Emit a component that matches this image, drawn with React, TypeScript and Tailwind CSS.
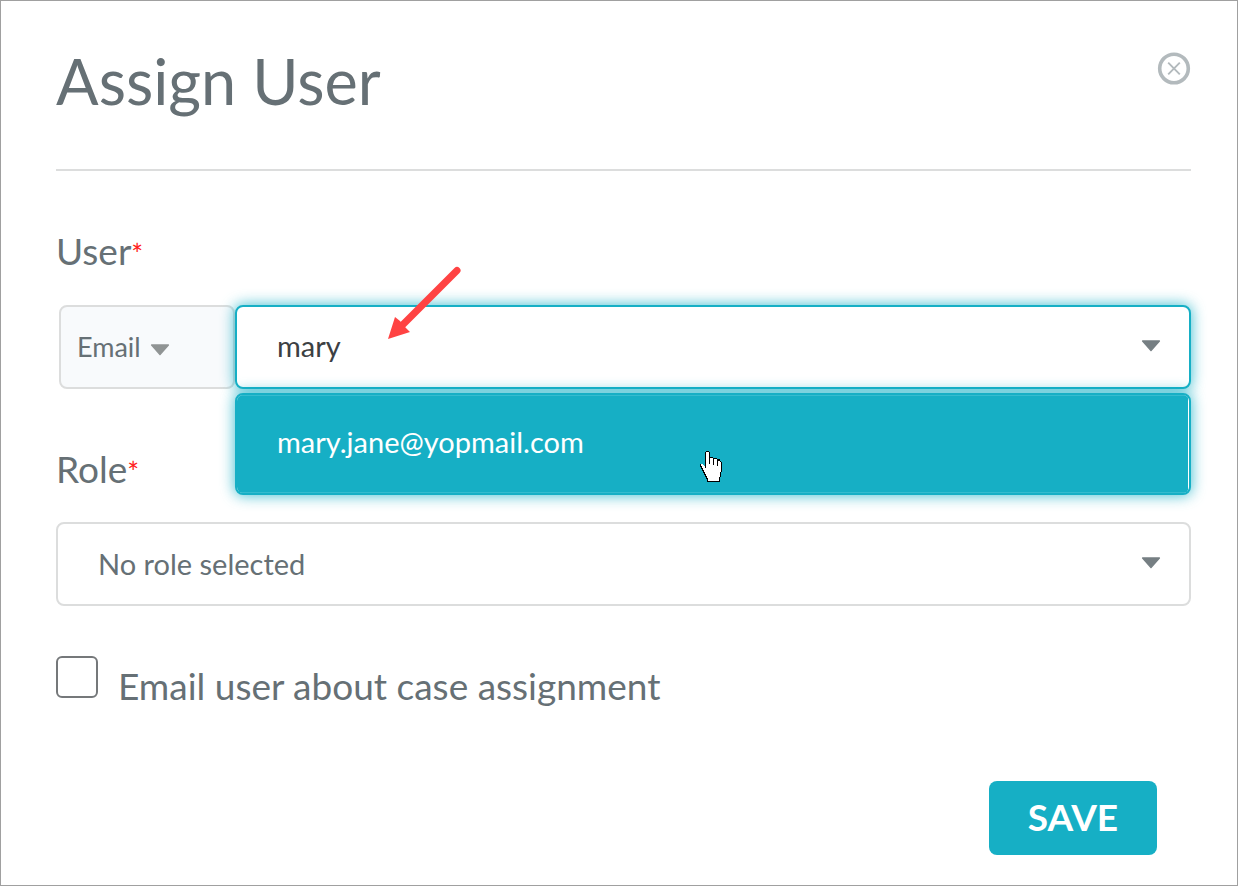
import { useState } from "react";

function Caret({ className }: { className: string }) {
  return (
    <svg
      aria-hidden="true"
      viewBox="0 0 20 12"
      className={`pointer-events-none absolute h-3 w-5 ${className}`}
    >
      <path
        d="M1.6 1h16.8L10 10.6z"
        fill="currentColor"
        stroke="currentColor"
        strokeWidth="1.4"
        strokeLinejoin="round"
      />
    </svg>
  );
}

function PointerCursor() {
  return (
    <svg
      aria-hidden="true"
      viewBox="0 0 22 31"
      shapeRendering="crispEdges"
      className="pointer-events-none absolute top-[146px] left-[465px] h-[31px] w-[22px]"
    >
      <path
        d="M6 0h3v1h1v5h3v1h4v1h3v2h1v1h1v10h-1v5h-1v5H7v-3H6v-2H5v-2H4v-2H3v-2H2v-2H1v-2H0v-3h3v1h1v1h1V1h1z"
        fill="#000"
      />
      <path
        d="M6 1h3v12h1V7h3v7h1V8h3v7h1v-5h2v1h1v10h-1v5h-1v4H8v-3H7v-2H6v-2H5v-2H4v-2H3v-2H2v-2H1v-2h2v1h1v1h1v2h1z"
        fill="#fff"
      />
    </svg>
  );
}

function RequiredLabel({ htmlFor, children }: { htmlFor: string; children: string }) {
  return (
    <label htmlFor={htmlFor} className="mt-[58px] block text-[37px] leading-[44px]">
      {children}
      <span className="text-[28px] leading-none text-[#ff2020]">*</span>
    </label>
  );
}

export default function App() {
  const [query, setQuery] = useState("mary");
  const [notify, setNotify] = useState(false);

  return (
    <main className="min-h-screen border border-[#a0a0a0] bg-white pt-12 pr-[46px] pb-[30px] pl-[55px] font-['Lato',sans-serif] text-[#667075]">
      <header className="flex items-start justify-between border-b-2 border-[#dcdddd] pb-14">
        <h1 className="text-[63px] leading-[64px]">Assign User</h1>
        <button type="button" aria-label="Close" className="mt-[3px] text-[#b3babd]">
          <svg viewBox="0 0 34 34" className="size-[34px]" fill="none" stroke="currentColor">
            <circle cx="17" cy="16.500" r="14.3" strokeWidth="3.6" />
            <path d="M11.2 10.7l11.6 11.6M22.8 10.7L11.2 22.3" strokeWidth="1.9" />
          </svg>
        </button>
      </header>

      <form onSubmit={(e) => e.preventDefault()}>
        <RequiredLabel htmlFor="user">User</RequiredLabel>
        <div className="mt-8 flex pl-[3px]">
          <div className="relative w-44 shrink-0">
            <select
              aria-label="Search by"
              className="h-[84px] w-full appearance-none rounded-lg border-2 border-[#dcdddd] bg-[#f8fafc] pl-4 text-[27px]"
            >
              <option>Email</option>
              <option>Name</option>
            </select>
            <Caret className="top-[39px] left-[91px] text-[#909494]" />
          </div>
          <div className="relative min-w-0 grow">
            <input
              id="user"
              role="combobox"
              aria-expanded="true"
              aria-controls="user-options"
              autoComplete="off"
              value={query}
              onChange={(e) => setQuery(e.target.value)}
              className="block h-[84px] w-full rounded-lg border-2 border-[#16afc5] bg-white px-10 pb-1 text-[29px] text-[#3c4043] shadow-[0_0_14px_1px_rgba(22,175,197,0.75)] outline-none"
            />
            <Caret className="top-[35px] right-[30px] text-[#767f83]" />
            <ul
              id="user-options"
              role="listbox"
              className="absolute top-[88px] right-0 left-0 overflow-hidden rounded-lg border-2 border-[#16afc5] bg-white shadow-[0_0_14px_1px_rgba(22,175,197,0.75)]"
            >
              <li
                role="option"
                aria-selected="true"
                className="mr-px border-y border-[#35bbce] bg-[#16afc5] px-10 pt-[26px] pb-[30px] text-[29px] leading-[40px] text-white"
              >
                mary.jane@yopmail.com
              </li>
            </ul>
            <PointerCursor />
            <svg
              aria-hidden="true"
              viewBox="0 0 74 74"
              className="pointer-events-none absolute -top-[39px] left-[152px] size-[74px]"
            >
              <path d="M70 4.500L14 60.500" stroke="#ff4343" strokeWidth="7" strokeLinecap="round" />
              <path d="M1 73L8 51l5 4 5 6 5 5z" fill="#ff4343" />
            </svg>
          </div>
        </div>

        <RequiredLabel htmlFor="role">Role</RequiredLabel>
        <div className="relative mt-[31px]">
          <select
            id="role"
            className="h-[84px] w-full appearance-none rounded-lg border-2 border-[#dcdddd] bg-white px-10 text-[29px]"
          >
            <option>No role selected</option>
          </select>
          <Caret className="top-[35px] right-[30px] text-[#767f83]" />
        </div>

        <div className="mt-[50px] flex items-start gap-5">
          <input
            id="notify"
            type="checkbox"
            checked={notify}
            onChange={(e) => setNotify(e.target.checked)}
            className="size-[42px] shrink-0 appearance-none rounded-md border-2 border-[#75787a] bg-white checked:bg-[#16afc5]"
          />
          <label htmlFor="notify" className="pt-2 text-[37px] leading-[44px]">
            Email user about case assignment
          </label>
        </div>

        <div className="mt-[73px] flex justify-end pr-[34px]">
          <button
            type="submit"
            className="h-[74px] w-[168px] rounded-lg bg-[#16afc5] pb-0.5 text-[37px] font-bold text-white"
          >
            SAVE
          </button>
        </div>
      </form>
    </main>
  );
}
